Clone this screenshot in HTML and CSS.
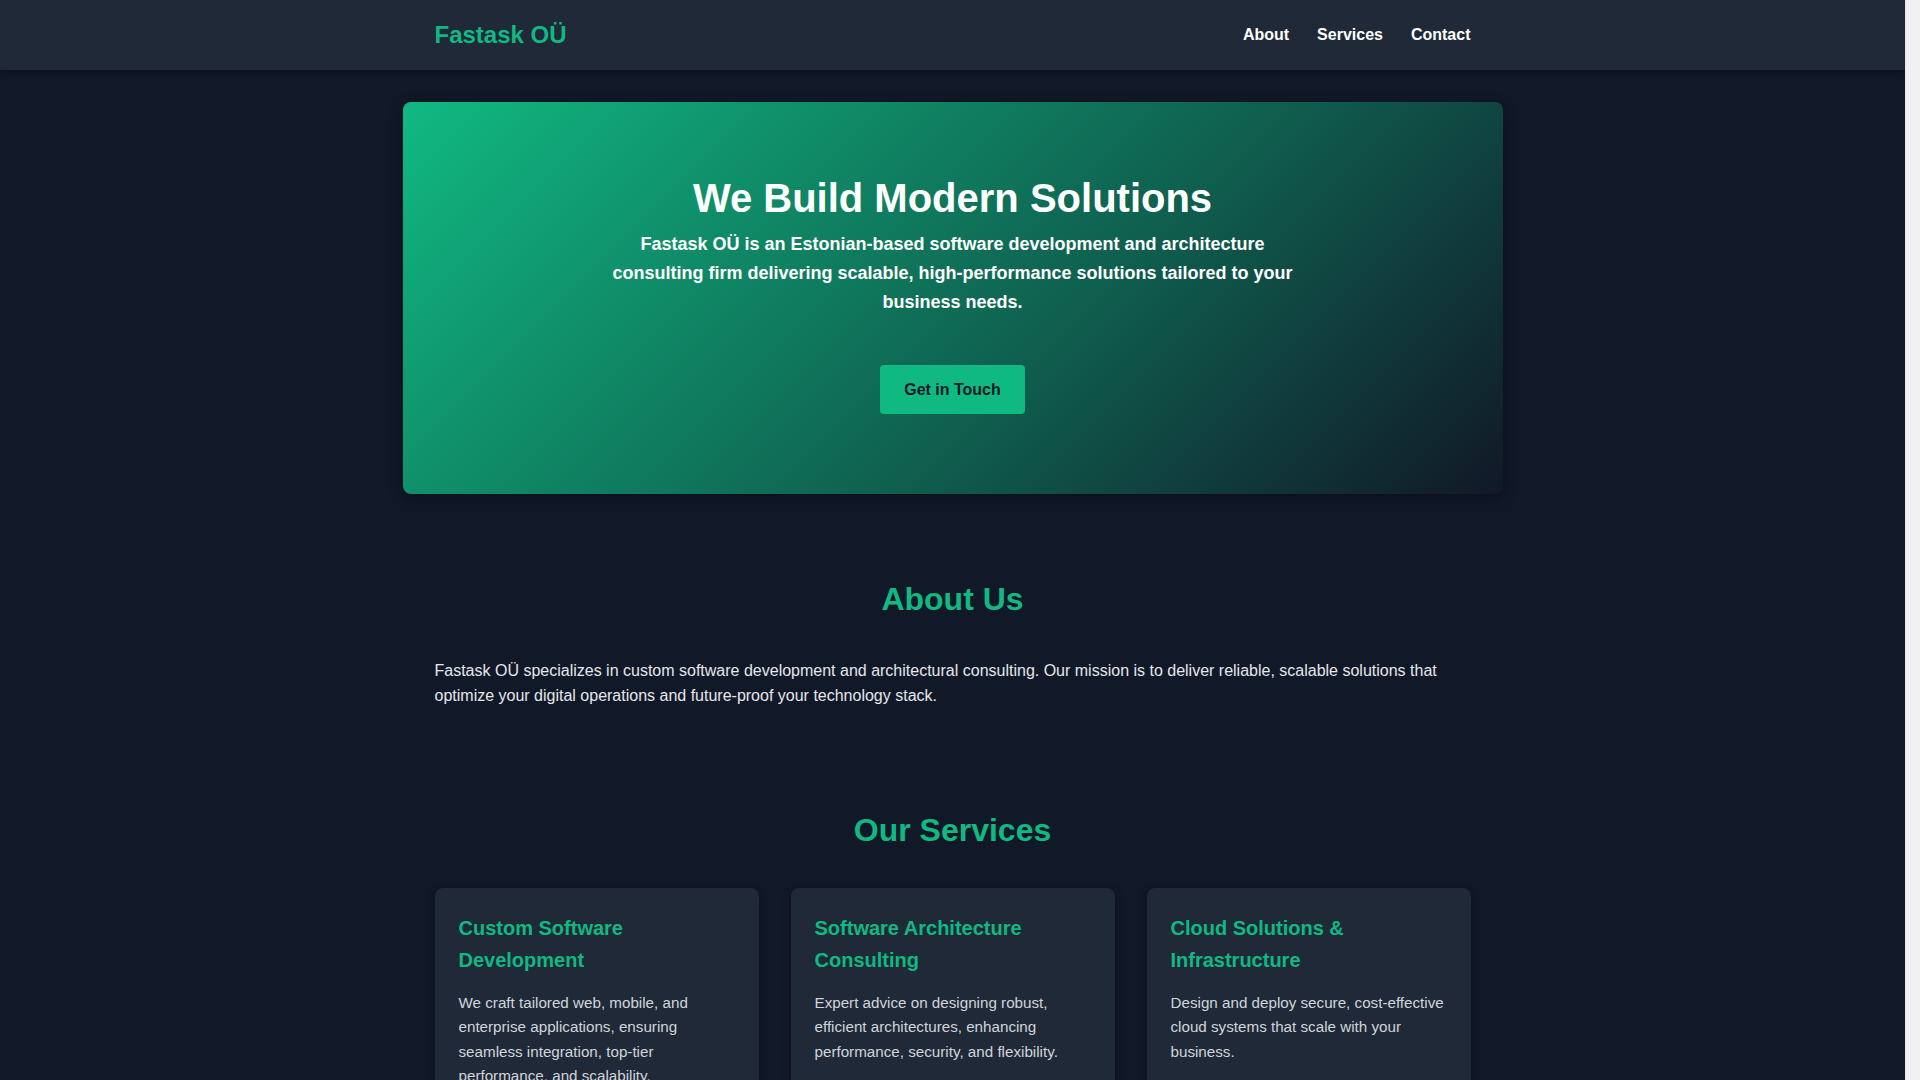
FILE: index.html
```html
<!DOCTYPE html>
<html lang="en">
<head>
<meta charset="UTF-8">
<title>Fastask OÜ</title>
<link rel="stylesheet" href="styles.css">
</head>
<body>
<div class="scrollbar" aria-hidden="true"></div>
<header class="site-header">
  <div class="container nav-inner">
    <a class="logo" href="#">Fastask OÜ</a>
    <nav class="nav-links">
      <a href="#about">About</a>
      <a href="#services">Services</a>
      <a href="#contact">Contact</a>
    </nav>
  </div>
</header>

<main>
  <section class="hero">
    <h1 class="hero-title">We Build Modern Solutions</h1>
    <p class="hero-text">Fastask OÜ is an Estonian-based software development and architecture consulting firm delivering scalable, high-performance solutions tailored to your business needs.</p>
    <a class="btn" href="#contact">Get in Touch</a>
  </section>

  <section class="section" id="about">
    <h2 class="section-title">About Us</h2>
    <p class="about-text">Fastask OÜ specializes in custom software development and architectural consulting. Our mission is to deliver reliable, scalable solutions that optimize your digital operations and future-proof your technology stack.</p>
  </section>

  <section class="section" id="services">
    <h2 class="section-title">Our Services</h2>
    <div class="cards">
      <div class="card">
        <h3 class="card-title">Custom Software Development</h3>
        <p class="card-text">We craft tailored web, mobile, and enterprise applications, ensuring seamless integration, top-tier performance, and scalability.</p>
      </div>
      <div class="card">
        <h3 class="card-title">Software Architecture Consulting</h3>
        <p class="card-text">Expert advice on designing robust, efficient architectures, enhancing performance, security, and flexibility.</p>
      </div>
      <div class="card">
        <h3 class="card-title">Cloud Solutions &amp; Infrastructure</h3>
        <p class="card-text">Design and deploy secure, cost-effective cloud systems that scale with your business.</p>
      </div>
    </div>
  </section>
</main>
</body>
</html>
```

FILE: styles.css
```css
* {
  box-sizing: border-box;
}

html, body {
  margin: 0;
  padding: 0;
}

body {
  background: #111827;
  color: #e5e7eb;
  font-family: "Liberation Sans", Arial, sans-serif;
  font-size: 16px;
  line-height: 1.6;
  margin-right: 15px;
}

a {
  text-decoration: none;
}

.scrollbar {
  position: fixed;
  top: 0;
  right: 0;
  width: 15px;
  height: 100vh;
  background: #f1f1f1;
  border-left: 1px solid #e4e4e4;
  z-index: 10;
}

.container {
  max-width: 1100px;
  margin: 0 auto;
  padding: 0 32px;
}

.site-header {
  background: #1f2937;
  box-shadow: 0 2px 6px rgba(0, 0, 0, 0.35);
  padding: 16px 0;
  position: relative;
  z-index: 1;
}

.nav-inner {
  display: flex;
  align-items: center;
  justify-content: space-between;
}

.logo {
  color: #10b981;
  font-size: 24px;
  font-weight: bold;
}

.nav-links {
  display: flex;
  gap: 28px;
}

.nav-links a {
  color: #ffffff;
  font-weight: bold;
  font-size: 16px;
}

.hero {
  max-width: 1100px;
  margin: 32px auto 32px;
  padding: 72px 32px 80px;
  border-radius: 8px;
  background: linear-gradient(135deg, #10b981 0%, #0f5a4c 62%, #111827 100%);
  box-shadow: 0 4px 14px rgba(0, 0, 0, 0.35);
  display: flex;
  flex-direction: column;
  align-items: center;
  text-align: center;
  color: #ffffff;
}

.hero-title {
  margin: 0 0 8px;
  font-size: 40px;
  line-height: 1.2;
  font-weight: bold;
}

.hero-text {
  margin: 0;
  max-width: 700px;
  font-size: 18px;
  font-weight: bold;
  line-height: 1.6;
}

.btn {
  display: inline-block;
  margin-top: 48px;
  padding: 12px 24px;
  background: #10b981;
  color: #111827;
  font-weight: bold;
  font-size: 16px;
  border-radius: 4px;
}

.section {
  max-width: 1100px;
  margin: 0 auto;
  padding: 48px 32px;
}

.section-title {
  margin: 0 0 32px;
  text-align: center;
  color: #10b981;
  font-size: 32px;
  font-weight: bold;
  line-height: 1.6;
}

.about-text {
  margin: 0;
  color: #e5e7eb;
}

.cards {
  display: grid;
  grid-template-columns: repeat(3, 1fr);
  gap: 32px;
}

.card {
  background: #1f2937;
  border-radius: 8px;
  padding: 24px;
  box-shadow: 0 2px 8px rgba(0, 0, 0, 0.3);
}

.card-title {
  margin: 0 0 15px;
  color: #10b981;
  font-size: 20px;
  font-weight: bold;
  line-height: 1.6;
}

.card-text {
  margin: 0;
  font-size: 15.2px;
  color: #d1d5db;
  line-height: 1.6;
}
```
